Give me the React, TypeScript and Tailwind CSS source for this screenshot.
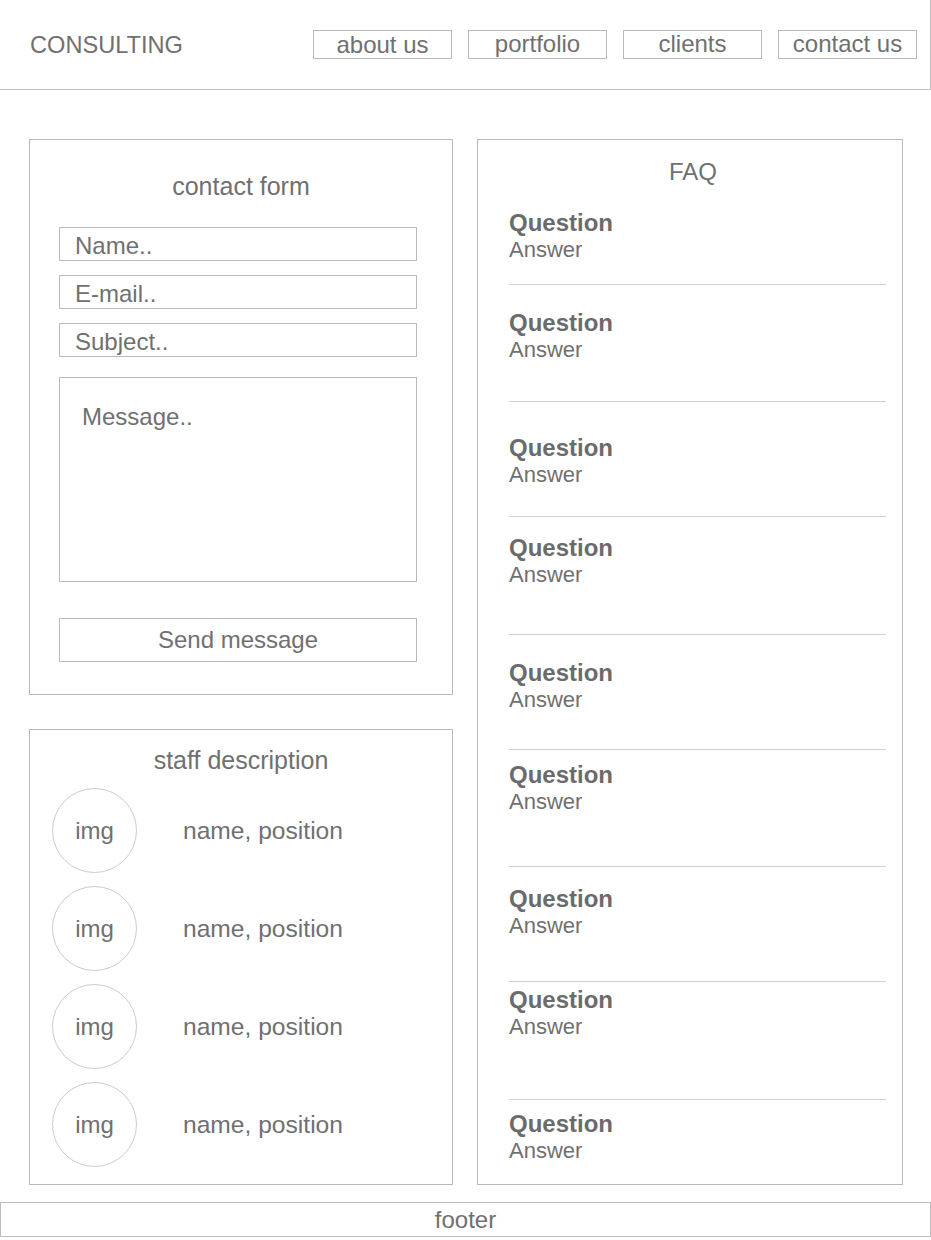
import React from "react";

const faq = [
  { q: "mt-[27px]", a: "mb-[23px]", line: true },
  { q: "mt-[26px]", a: "mb-[40px]", line: true },
  { q: "mt-[34px]", a: "mb-[30px]", line: true },
  { q: "mt-[19px]", a: "mb-[48px]", line: true },
  { q: "mt-[26px]", a: "mb-[38px]", line: true },
  { q: "mt-[13px]", a: "mb-[53px]", line: true },
  { q: "mt-[20px]", a: "mb-[44px]", line: true },
  { q: "mt-[6px]", a: "mb-[61px]", line: true },
  { q: "mt-[12px]", a: "mb-0", line: false },
];

const navItems = [
  { label: "about us", lh: "leading-[27px]" },
  { label: "portfolio", lh: "leading-[25px]" },
  { label: "clients", lh: "leading-[25px]" },
  { label: "contact us", lh: "leading-[25px]" },
];

function Field({ label }: { label: string }) {
  return (
    <div className="h-[34px] w-[358px] border border-[#b9b9b9] pl-[15px] pt-[6px] text-[24px] leading-[24px]">
      {label}
    </div>
  );
}

function Staff() {
  return (
    <div className="flex items-center">
      <div className="flex h-[85px] w-[85px] items-center justify-center rounded-full border border-[#cbcbcb] text-[24px] leading-[24px]">
        img
      </div>
      <div className="ml-[46px] text-[24.6px] leading-[24px]">name, position</div>
    </div>
  );
}

export default function App() {
  return (
    <div className="w-full bg-white text-[#707070] font-['Liberation_Sans',Arial,sans-serif]">
      <header className="flex h-[90px] w-full items-center justify-between border-b border-r border-[#bdbdbd] pl-[30px] pr-[13px]">
        <div className="text-[23.6px] leading-[24px]">CONSULTING</div>
        <nav className="flex gap-[16px]">
          {navItems.map((n) => (
            <div
              key={n.label}
              className={`h-[29px] w-[139px] border border-[#b9b9b9] text-center text-[24px] ${n.lh}`}
            >
              {n.label}
            </div>
          ))}
        </nav>
      </header>

      <main className="flex gap-[24px] pl-[29px] pt-[49px]">
        <div className="flex w-[424px] flex-col gap-[34px]">
          <section className="flex h-[556px] flex-col border border-[#b9b9b9] px-[29px] pt-[34px]">
            <div className="text-center text-[25px] leading-[24px]">contact form</div>
            <div className="mt-[29px] flex flex-col gap-[14px]">
              <Field label="Name.." />
              <Field label="E-mail.." />
              <Field label="Subject.." />
            </div>
            <div className="mt-[20px] h-[205px] w-[358px] border border-[#b9b9b9] pl-[22px] pt-[27px] text-[24px] leading-[24px]">
              Message..
            </div>
            <div className="mt-[36px] flex h-[44px] w-[358px] items-center justify-center border border-[#b9b9b9] text-[24px] leading-[24px]">
              Send message
            </div>
          </section>

          <section className="flex h-[456px] flex-col border border-[#b9b9b9] pl-[22px] pt-[18px]">
            <div className="pr-[22px] text-center text-[25px] leading-[24px]">staff description</div>
            <div className="mt-[16px] flex flex-col gap-[13px]">
              <Staff />
              <Staff />
              <Staff />
              <Staff />
            </div>
          </section>
        </div>

        <section className="flex h-[1046px] w-[426px] flex-col border border-[#b9b9b9] pt-[20px]">
          <div className="pl-[6px] text-center text-[24px] leading-[24px]">FAQ</div>
          <div className="flex flex-col pl-[31px] pr-[16px]">
            {faq.map((f, i) => (
              <div key={i} className="flex flex-col">
                <div className={`${f.q} text-[24px] font-bold leading-[24px] text-[#6b6b6b]`}>Question</div>
                <div className={`mt-[4px] ${f.a} text-[22px] leading-[22px]`}>Answer</div>
                {f.line && <div className="h-px w-full bg-[#cfcfcf]" />}
              </div>
            ))}
          </div>
        </section>
      </main>

      <footer className="mt-[17px] flex h-[35px] w-full items-center justify-center border border-[#bdbdbd] text-[24px] leading-[24px] shadow-[0_2px_3px_rgba(0,0,0,0.18)]">
        footer
      </footer>
    </div>
  );
}
